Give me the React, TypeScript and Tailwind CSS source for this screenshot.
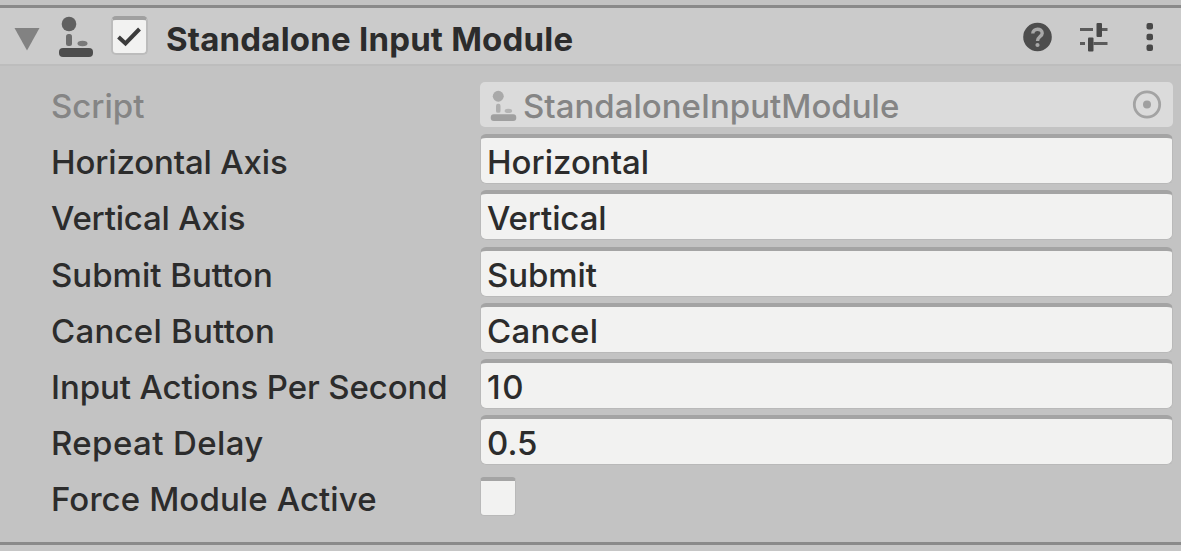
import React from "react";

type Row = { label: string; value: string; labelTrack: string; valueTrack: string };

const rows: Row[] = [
  { label: "Horizontal Axis", value: "Horizontal", labelTrack: "tracking-[-0.15px]", valueTrack: "tracking-[0px]" },
  { label: "Vertical Axis", value: "Vertical", labelTrack: "tracking-[-0.2px]", valueTrack: "tracking-[-0.1px]" },
  { label: "Submit Button", value: "Submit", labelTrack: "tracking-[0px]", valueTrack: "tracking-[-0.1px]" },
  { label: "Cancel Button", value: "Cancel", labelTrack: "tracking-[0.25px]", valueTrack: "tracking-[0.3px]" },
  { label: "Input Actions Per Second", value: "10", labelTrack: "tracking-[-0.1px]", valueTrack: "tracking-[1.5px]" },
  { label: "Repeat Delay", value: "0.5", labelTrack: "tracking-[0.4px]", valueTrack: "tracking-[0px]" },
];

function ScriptIcon({ className }: { className: string }) {
  return (
    <svg className={className} viewBox="0 0 36 42" fill="currentColor">
      <circle cx="11" cy="8" r="7.3" opacity="0.85" />
      <rect x="8" y="18" width="6" height="12" rx="2.5" opacity="0.75" />
      <ellipse cx="24.5" cy="27.5" rx="5" ry="2.8" opacity="0.65" />
      <rect x="1" y="32" width="34" height="9" rx="4" />
    </svg>
  );
}

function Label({ text, className }: { text: string; className: string }) {
  return (
    <div className={`w-[429px] shrink-0 whitespace-nowrap pt-[7px] leading-[42px] ${className}`}>{text}</div>
  );
}

export default function App() {
  return (
    <div className="flex h-[551px] w-[1181px] flex-col overflow-hidden bg-[#c3c3c3] text-[33px] font-[450] text-[#2c2c2c] font-['Inter',sans-serif]">
      <div className="h-[5px] shrink-0" />
      <div className="h-[3px] shrink-0 bg-[#8a8a8a]" />
      <header className="flex h-[58px] shrink-0 items-start border-b-2 border-[#bdbdbd] bg-[#cbcbcb] pl-[14px] pt-2">
        <svg className="mt-[11px] h-[24px] w-[26px] shrink-0 text-[#828282]" viewBox="0 0 26 24" fill="currentColor">
          <path d="M0.5 1H25.5L13 23.5Z" />
        </svg>
        <ScriptIcon className="ml-[18px] h-[42px] w-[36px] shrink-0 text-[#4d4d4d]" />
        <div className="ml-[17px] flex h-[39px] w-[37px] shrink-0 items-center justify-center rounded-[5px] border-2 border-t-[4px] border-[#bcbcbc] border-t-[#a0a0a0] bg-[#f2f2f1]">
          <svg className="h-[24px] w-[26px] shrink-0" viewBox="0 0 26 24" fill="none" stroke="#3b3b3b" strokeWidth="4">
            <path d="M1.5 12L8.5 18.5L22.5 4" />
          </svg>
        </div>
        <h1 className="ml-[18px] grow whitespace-nowrap text-[33px] font-bold leading-[46px] tracking-[0.2px]">Standalone Input Module</h1>
        <svg className="mt-[6px] h-[30px] w-[30px] shrink-0" viewBox="0 0 30 30">
          <circle cx="14.5" cy="15" r="14.3" fill="#4d4d4d" />
          <path d="M9.8 11.5C9.8 5.8 19.2 5.8 19.2 11.3C19.2 14.5 14.5 14.8 14.5 19" fill="none" stroke="#a8a8a8" strokeWidth="3.4" />
          <circle cx="14.5" cy="23" r="2.1" fill="#a8a8a8" />
        </svg>
        <svg className="ml-[26px] mt-[6px] h-[30px] w-[30px] shrink-0" viewBox="0 0 30 30" fill="#484848">
          <rect x="1" y="6" width="13" height="3" opacity="0.85" />
          <rect x="17.5" y="1" width="5.5" height="14" rx="1" />
          <rect x="23" y="6" width="5.5" height="3" opacity="0.85" />
          <rect x="1" y="20" width="5" height="3" opacity="0.85" />
          <rect x="9" y="15.5" width="5.5" height="14" rx="1" />
          <rect x="14.5" y="20" width="14" height="3" opacity="0.85" />
        </svg>
        <svg className="ml-[37px] mr-[27px] mt-[6px] h-[30px] w-[8px] shrink-0" viewBox="0 0 8 30" fill="#484848">
          <rect x="0.5" y="1" width="6.5" height="6.5" rx="2" />
          <rect x="0.5" y="11.8" width="6.5" height="6.5" rx="2" />
          <rect x="0.5" y="22.4" width="6.5" height="6.5" rx="2" />
        </svg>
      </header>

      <main className="flex grow flex-col pl-[51px] pr-[8px] pt-3">
        <div className="flex h-[56.2px] shrink-0 items-start text-[#858585]">
          <Label text="Script" className="" />
          <div className="mt-[4px] flex h-[45px] grow items-center rounded-[5px] bg-[#dbdbdb] pl-[10px] pr-[11px]">
            <ScriptIcon className="mt-[3px] h-[32px] w-[27px] shrink-0 text-[#a0a0a0]" />
            <span className="ml-[6px] grow pt-[2px] leading-[42px]">StandaloneInputModule</span>
            <svg className="h-[30px] w-[30px] shrink-0" viewBox="0 0 30 30">
              <circle cx="15" cy="14.5" r="12.7" fill="none" stroke="#a3a3a3" strokeWidth="2.8" />
              <circle cx="15" cy="14.5" r="4" fill="#a0a0a0" />
            </svg>
          </div>
        </div>
        {rows.map((row) => (
          <div key={row.label} className="flex h-[56.2px] shrink-0 items-start">
            <Label text={row.label} className={row.labelTrack} />
            <div className="h-[50px] grow rounded-[6px] border border-t-[4px] border-[#b9b9b9] border-t-[#a4a4a4] bg-[#f2f2f1] pl-[6px] pt-[3px] leading-[42px]">
              <span className={row.valueTrack}>{row.value}</span>
            </div>
          </div>
        ))}
        <div className="flex shrink-0 items-start">
          <Label text="Force Module Active" className="tracking-[0.1px]" />
          <div className="mt-[6px] h-[39px] w-[36px] rounded-[4px] border border-t-[4px] border-[#b9b9b9] border-t-[#a4a4a4] bg-[#f2f2f1]" />
        </div>
      </main>
      <div className="h-[3px] shrink-0 bg-[#8a8a8a]" />
      <div className="h-[6px] shrink-0 bg-[#c6c6c6]" />
    </div>
  );
}
